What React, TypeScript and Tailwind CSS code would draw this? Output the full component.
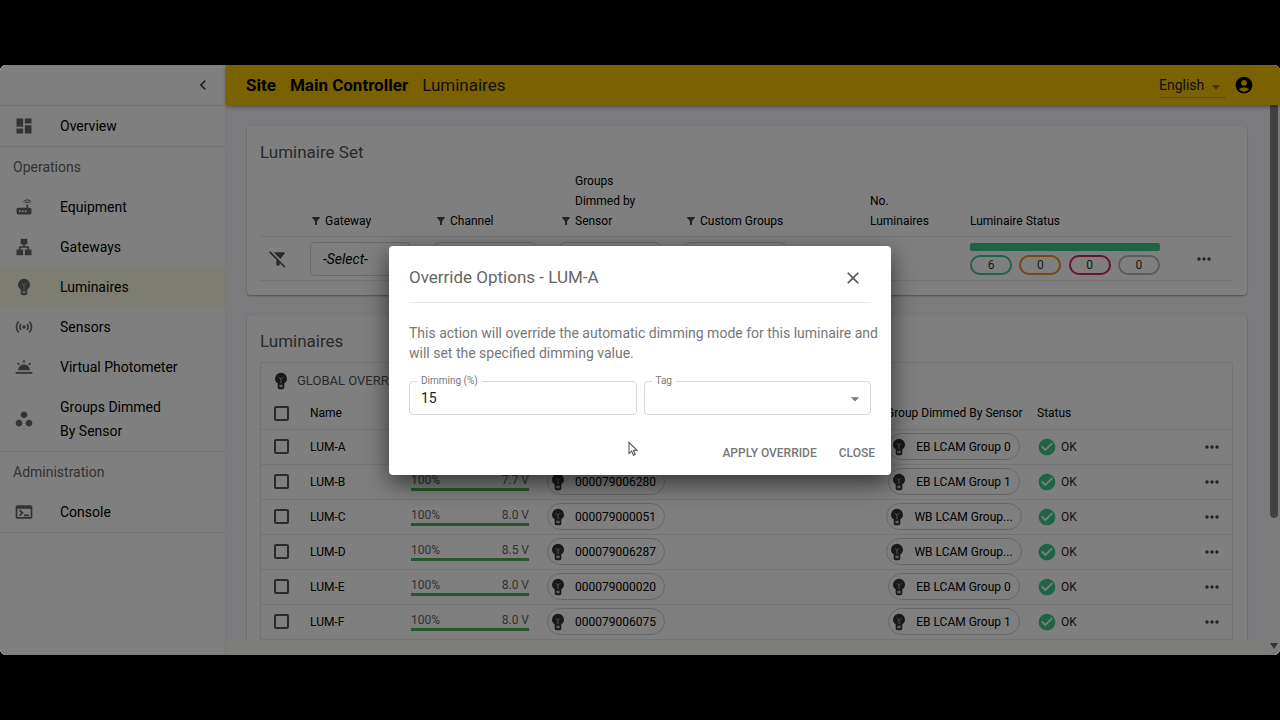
import React, { useState } from "react";
import type { IconType } from "react-icons";
import {
  MdDashboard,
  MdRouter,
  MdLan,
  MdSensors,
  MdWbTwilight,
  MdWorkspaces,
  MdOutlineTerminal,
  MdChevronLeft,
  MdAccountCircle,
  MdArrowDropDown,
  MdFilterAlt,
  MdFilterAltOff,
  MdMoreHoriz,
  MdCheckCircle,
  MdClose,
} from "react-icons/md";

interface Luminaire {
  name: string;
  level: number;
  volts: string;
  serial: string;
  group: string;
  status: string;
}

const luminaires: Luminaire[] = [
  { name: "LUM-A", level: 100, volts: "7.7 V", serial: "000079006281", group: "EB LCAM Group 0", status: "OK" },
  { name: "LUM-B", level: 100, volts: "7.7 V", serial: "000079006280", group: "EB LCAM Group 1", status: "OK" },
  { name: "LUM-C", level: 100, volts: "8.0 V", serial: "000079000051", group: "WB LCAM Group...", status: "OK" },
  { name: "LUM-D", level: 100, volts: "8.5 V", serial: "000079006287", group: "WB LCAM Group...", status: "OK" },
  { name: "LUM-E", level: 100, volts: "8.0 V", serial: "000079000020", group: "EB LCAM Group 0", status: "OK" },
  { name: "LUM-F", level: 100, volts: "8.0 V", serial: "000079006075", group: "EB LCAM Group 1", status: "OK" },
];

const filters = ["Gateway", "Channel", "Groups Dimmed by Sensor", "Custom Groups"];

const counters = [
  { label: "OK", value: 6, className: "border-[#3fc79a]" },
  { label: "Warning", value: 0, className: "border-[#f08c1e]" },
  { label: "Error", value: 0, className: "border-[#c8285a]" },
  { label: "Unknown", value: 0, className: "border-[#b9b9b9]" },
];

function BulbIcon({ className }: { className?: string }) {
  return (
    <svg viewBox="0 0 24 24" className={className} fill="currentColor" aria-hidden="true">
      <path d="M12 2a7.200 7.200 0 0 0-7.200 7.200c0 2.600 1.400 4.400 3.200 5.600v5A2.200 2.200 0 0 0 10.200 22h3.600a2.200 2.200 0 0 0 2.200-2.200v-5c1.800-1.200 3.200-3 3.200-5.600A7.200 7.200 0 0 0 12 2z" />
      <path d="M9.500 7.500L12 10l2.500-2.500M12 10v4.500" fill="none" stroke="#bbb" strokeWidth="1.100" />
      <path d="M10 16.500h4v3h-4z" fill="#bbb" />
    </svg>
  );
}

function NavItem({ icon: Icon, label, active }: { icon: IconType | typeof BulbIcon; label: string; active?: boolean }) {
  return (
    <a
      href="#"
      className={`flex min-h-10 items-center gap-[26px] py-2 pl-3.5 text-sm leading-6 text-black ${active ? "bg-[#fafae8]" : ""}`}
    >
      <Icon className="size-5 shrink-0 text-[#666]" />
      <span className="w-[118px]">{label}</span>
    </a>
  );
}

function Sidebar() {
  return (
    <nav className="flex w-[226px] shrink-0 flex-col border-r border-[#ececec] bg-white">
      <div className="flex h-[41px] items-center justify-end border-b border-[#e6e6e6] pr-3">
        <button type="button" aria-label="Collapse menu">
          <MdChevronLeft className="size-5 text-[#444]" />
        </button>
      </div>
      <div className="border-b border-[#e6e6e6]">
        <NavItem icon={MdDashboard} label="Overview" />
      </div>
      <div className="border-b border-[#e6e6e6]">
        <h2 className="flex h-10 items-center pl-[13px] text-sm text-[#666]">Operations</h2>
        <NavItem icon={MdRouter} label="Equipment" />
        <NavItem icon={MdLan} label="Gateways" />
        <NavItem icon={BulbIcon} label="Luminaires" active />
        <NavItem icon={MdSensors} label="Sensors" />
        <NavItem icon={MdWbTwilight} label="Virtual Photometer" />
        <NavItem icon={MdWorkspaces} label="Groups Dimmed By Sensor" />
      </div>
      <div className="border-b border-[#e6e6e6]">
        <h2 className="flex h-10 items-center pl-[13px] text-sm text-[#666]">Administration</h2>
        <NavItem icon={MdOutlineTerminal} label="Console" />
      </div>
    </nav>
  );
}

function TopBar() {
  return (
    <header className="relative flex h-10 shrink-0 items-center bg-[#f5c400] pr-[26px] pl-5 shadow-[0_2px_4px_rgba(0,0,0,0.35)]">
      <div className="flex flex-1 gap-3.5 text-[17px] leading-6">
        <a href="#" className="font-bold text-black">Site</a>
        <a href="#" className="font-bold text-black">Main Controller</a>
        <span className="text-[#222]">Luminaires</span>
      </div>
      <div className="relative mr-2 border-b border-[#c29b00]">
        <select aria-label="Language" className="w-[67px] appearance-none text-sm leading-6 text-[#222]">
          <option>English</option>
        </select>
        <MdArrowDropDown className="pointer-events-none absolute top-1 right-0 size-5 text-[#7a6200]" />
      </div>
      <button type="button" aria-label="Account">
        <MdAccountCircle className="size-5 text-black" />
      </button>
    </header>
  );
}

function LuminaireSet() {
  return (
    <section className="rounded-sm bg-white pt-4 pr-[15px] pb-3.5 pl-[13px] shadow-[0_1px_2px_rgba(0,0,0,0.35)]">
      <h2 className="text-[17px] leading-5 text-[#555]">Luminaire Set</h2>
      <table className="mt-2 w-full table-fixed text-left text-xs leading-5">
        <colgroup>
          <col className="w-[50px]" />
          <col className="w-[125px]" />
          <col className="w-[125px]" />
          <col className="w-[125px]" />
          <col className="w-[185px]" />
          <col className="w-[100px]" />
          <col className="w-[200px]" />
          <col />
        </colgroup>
        <thead>
          <tr className="border-b border-[#e8e8e8] align-bottom text-black">
            <td />
            {filters.map((f) => (
              <th key={f} className="pt-px pb-[5px] font-normal">
                <div className="flex items-end">
                  <MdFilterAlt className="mb-1 size-3 shrink-0 text-[#444]" />
                  <span className={f.startsWith("Groups") ? "ml-[3px] w-16" : "ml-[3px]"}>{f}</span>
                </div>
              </th>
            ))}
            <th className="pr-8 pb-[5px] font-normal">No. Luminaires</th>
            <th className="pb-[5px] font-normal">Luminaire Status</th>
            <td />
          </tr>
        </thead>
        <tbody>
          <tr className="h-11 border-b border-[#e8e8e8]">
            <td className="pl-2">
              <button type="button" aria-label="Clear filters" className="block">
                <MdFilterAltOff className="size-5 text-[#555]" />
              </button>
            </td>
            {filters.map((f) => (
              <td key={f}>
                <select
                  aria-label={f}
                  className="block h-[34px] w-[100px] appearance-none rounded-sm border border-[#d4d4d4] px-3 text-sm text-black italic"
                >
                  <option>-Select-</option>
                </select>
              </td>
            ))}
            <td>6</td>
            <td>
              <div className="h-2 w-[190px] rounded-xs bg-[#3fc78a]" />
              <div className="mt-1 flex w-[190px] justify-between">
                {counters.map((c) => (
                  <span
                    key={c.label}
                    title={c.label}
                    className={`flex h-5 w-[42px] items-center justify-center rounded-full border-2 text-xs text-[#333] ${c.className}`}
                  >
                    {c.value}
                  </span>
                ))}
              </div>
            </td>
            <td className="pl-6">
              <button type="button" aria-label="More" className="block">
                <MdMoreHoriz className="size-5 text-[#444]" />
              </button>
            </td>
          </tr>
        </tbody>
      </table>
    </section>
  );
}

function Chip({ label }: { label: string }) {
  return (
    <span className="inline-flex h-[27px] items-center gap-[7px] rounded-full border border-[#cdcdcd] pr-2 text-xs whitespace-nowrap text-black">
      <BulbIcon className="size-5 text-[#333]" />
      {label}
    </span>
  );
}

function Checkbox({ label }: { label: string }) {
  return (
    <input
      type="checkbox"
      aria-label={label}
      className="block size-[15px] appearance-none rounded-xs border-2 border-[#555]"
    />
  );
}

function LuminaireTable() {
  return (
    <section className="rounded-sm bg-white pt-4 pr-3.5 pb-3 pl-[13px] shadow-[0_1px_2px_rgba(0,0,0,0.35)]">
      <h2 className="mb-[11px] text-[17px] leading-5 text-[#555]">Luminaires</h2>
      <div className="border border-[#e8e8e8]">
        <button type="button" className="flex h-[35px] items-center gap-1.5 pl-2.5 text-[13px] text-[#555]">
          <BulbIcon className="size-5 text-[#333]" />
          GLOBAL OVERRIDE
        </button>
        <table className="w-full table-fixed text-left text-xs">
          <colgroup>
            <col className="w-[49px]" />
            <col className="w-[101px]" />
            <col className="w-[136px]" />
            <col className="w-[339px]" />
            <col className="w-[151px]" />
            <col />
            <col className="w-[40px]" />
          </colgroup>
          <thead>
            <tr className="h-[31px] border-b border-[#e8e8e8] text-black">
              <td className="pl-[13px]">
                <Checkbox label="Select all" />
              </td>
              <th className="font-normal">Name</th>
              <th className="font-normal">Dimming</th>
              <th className="font-normal">Luminaire</th>
              <th className="font-normal whitespace-nowrap">Group Dimmed By Sensor</th>
              <th className="font-normal">Status</th>
              <td />
            </tr>
          </thead>
          <tbody>
            {luminaires.map((l) => (
              <tr key={l.name} className="h-[35px] border-b border-[#e8e8e8]">
                <td className="pl-[13px]">
                  <Checkbox label={l.name} />
                </td>
                <td className="text-black">{l.name}</td>
                <td>
                  <div className="flex w-[118px] justify-between leading-4 text-[#666]">
                    <span>{l.level}%</span>
                    <span>{l.volts}</span>
                  </div>
                  <div className="h-[3px] w-[118px] bg-[#4caf50]" style={{ maxWidth: `${l.level}%` }} />
                </td>
                <td>
                  <div className="flex">
                    <Chip label={l.serial} />
                  </div>
                </td>
                <td>
                  <div className="flex w-[136px] justify-center">
                    <Chip label={l.group} />
                  </div>
                </td>
                <td>
                  <div className="flex items-center gap-1 text-[#222]">
                    <MdCheckCircle className="size-5 text-[#3cc98c]" />
                    {l.status}
                  </div>
                </td>
                <td>
                  <button type="button" aria-label={`More ${l.name}`} className="ml-2.5 block">
                    <MdMoreHoriz className="size-5 text-[#444]" />
                  </button>
                </td>
              </tr>
            ))}
          </tbody>
        </table>
      </div>
    </section>
  );
}

function OverrideDialog() {
  const [dimming, setDimming] = useState("15");
  const [tag, setTag] = useState("");

  return (
    <div
      role="dialog"
      aria-label="Override Options"
      className="w-full max-w-[502px] rounded-sm bg-white px-5 pt-3 pb-2 shadow-[0_8px_24px_rgba(0,0,0,0.6)]"
    >
      <div className="flex h-[45px] items-center justify-between border-b border-[#e8eaea] pr-2 pb-1">
        <h2 className="text-[17px] text-[#666]">Override Options - LUM-A</h2>
        <button type="button" aria-label="Close dialog">
          <MdClose className="size-5 text-[#555]" />
        </button>
      </div>
      <p className="mt-5 -mr-3 text-sm leading-5 text-[#777]">
        This action will override the automatic dimming mode for this luminaire and will set the specified dimming value.
      </p>
      <div className="mt-[18px] grid grid-cols-2 gap-[7px]">
        <div className="relative">
          <label htmlFor="dimming" className="absolute -top-2 left-2 bg-white px-1 text-[10px] leading-4 text-[#777]">
            Dimming (%)
          </label>
          <input
            id="dimming"
            type="text"
            value={dimming}
            onChange={(e) => setDimming(e.target.value)}
            className="block h-[34px] w-full rounded-sm border border-[#d8d8d8] px-[11px] text-sm text-[#222]"
          />
        </div>
        <div className="relative">
          <label htmlFor="tag" className="absolute -top-2 left-2 bg-white px-1 text-[10px] leading-4 text-[#777]">
            Tag
          </label>
          <select
            id="tag"
            value={tag}
            onChange={(e) => setTag(e.target.value)}
            className="block h-[34px] w-full appearance-none rounded-sm border border-[#d8d8d8] px-[11px] text-sm text-[#333]"
          >
            <option value=""></option>
          </select>
          <MdArrowDropDown className="pointer-events-none absolute top-2 right-1.5 size-5 text-[#777]" />
        </div>
      </div>
      <div className="-mr-1 mt-6 flex h-7 items-center justify-end gap-[22px] text-xs font-medium text-[#777]">
        <button type="button">APPLY OVERRIDE</button>
        <button type="button">CLOSE</button>
      </div>
    </div>
  );
}

export default function App() {
  return (
    <div className="flex h-screen flex-col bg-black py-[65px] font-[Roboto,sans-serif]">
      <div className="relative flex min-h-0 flex-1 overflow-hidden rounded-md bg-white">
        <Sidebar />
        <div className="flex min-w-0 flex-1 flex-col">
          <TopBar />
          <div className="flex min-h-0 flex-1">
            <div className="flex min-w-0 flex-1 flex-col">
              <main className="flex min-h-0 flex-1 flex-col gap-5 overflow-hidden bg-[#f6f5f8] px-[21px] pt-[21px]">
                <LuminaireSet />
                <LuminaireTable />
              </main>
              <div className="h-[15px] shrink-0 bg-[#fbfaf9]" />
            </div>
            {/* Scrollbar */}
            <div className="flex w-3 flex-col items-center justify-between bg-[#f9f9f9]">
              <div className="h-3/4 w-2 rounded-b-sm bg-[#858585]" />
              <svg viewBox="0 0 10 10" className="mb-1 size-2.5" aria-hidden="true">
                <path d="M1 2h8L5 8z" fill="#666" />
              </svg>
            </div>
          </div>
        </div>

        {/* Modal */}
        <div className="absolute inset-0 flex items-center justify-center bg-black/50">
          <OverrideDialog />
          <svg viewBox="0 0 12 18" className="absolute top-[376px] left-[627px] h-4 w-3" aria-hidden="true">
            <path d="M1.500 1.500v12.500l3-2.700 2 4.700 2-.9-2-4.600h4z" fill="#fff" stroke="#555" strokeWidth="1.200" />
          </svg>
        </div>
      </div>
    </div>
  );
}
